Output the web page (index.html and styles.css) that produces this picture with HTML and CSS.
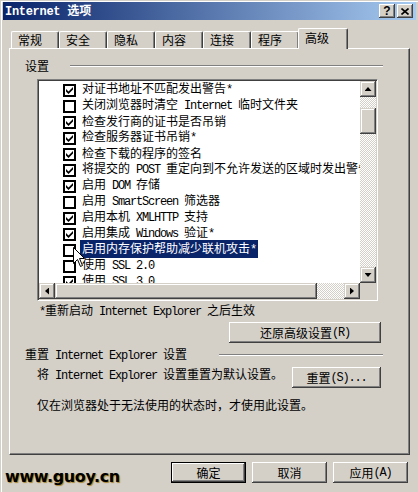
FILE: index.html
```html
<!DOCTYPE html>
<html lang="zh-CN">
<head>
    <meta charset="UTF-8">
    <title>Internet 选项</title>
    <link rel="stylesheet" href="styles.css">
</head>
<body>
    <div class="window">
        <div class="titlebar">
            <span class="title"><span class="en">Internet </span>选项</span>
            <div class="title-btns">
                <span class="tbtn help">?</span>
                <span class="tbtn">
                    <svg width="8" height="7" viewBox="0 0 8 7"><path d="M0.5 0.5 L7.5 6.5 M7.5 0.5 L0.5 6.5" stroke="#000" stroke-width="1.6"/></svg>
                </span>
            </div>
        </div>

        <div class="tabs">
            <div class="tab">常规</div>
            <div class="tab">安全</div>
            <div class="tab">隐私</div>
            <div class="tab">内容</div>
            <div class="tab">连接</div>
            <div class="tab">程序</div>
            <div class="tab active">高级</div>
        </div>

        <div class="panel">
            <div class="group-head">
                <span class="group-label">设置</span>
                <span class="rule"></span>
            </div>

            <div class="listbox">
                <div class="list-view">
                    <div class="item"><span class="cb on"></span><span class="label">对证书地址不匹配发出警告<span class="en">*</span></span></div>
                    <div class="item"><span class="cb"></span><span class="label">关闭浏览器时清空<span class="en"> Internet </span>临时文件夹</span></div>
                    <div class="item"><span class="cb on"></span><span class="label">检查发行商的证书是否吊销</span></div>
                    <div class="item"><span class="cb on"></span><span class="label">检查服务器证书吊销<span class="en">*</span></span></div>
                    <div class="item"><span class="cb on"></span><span class="label">检查下载的程序的签名</span></div>
                    <div class="item"><span class="cb on"></span><span class="label">将提交的<span class="en"> POST </span>重定向到不允许发送的区域时发出警告</span></div>
                    <div class="item"><span class="cb on"></span><span class="label">启用<span class="en"> DOM </span>存储</span></div>
                    <div class="item"><span class="cb"></span><span class="label">启用<span class="en"> SmartScreen </span>筛选器</span></div>
                    <div class="item"><span class="cb on"></span><span class="label">启用本机<span class="en"> XMLHTTP </span>支持</span></div>
                    <div class="item"><span class="cb on"></span><span class="label">启用集成<span class="en"> Windows </span>验证<span class="en">*</span></span></div>
                    <div class="item sel"><span class="cb"></span><span class="label">启用内存保护帮助减少联机攻击<span class="en">*</span></span></div>
                    <div class="item"><span class="cb"></span><span class="label">使用<span class="en"> SSL 2.0</span></span></div>
                    <div class="item"><span class="cb on"></span><span class="label">使用<span class="en"> SSL 3.0</span></span></div>
                </div>
                <div class="vscroll">
                    <span class="sbtn"><i class="arrow up"></i></span>
                    <div class="track"><span class="thumb"></span></div>
                    <span class="sbtn"><i class="arrow down"></i></span>
                </div>
                <div class="hscroll">
                    <span class="sbtn"><i class="arrow left"></i></span>
                    <div class="track"><span class="thumb"></span></div>
                    <span class="sbtn"><i class="arrow right"></i></span>
                </div>
                <div class="corner"></div>
            </div>

            <p class="note"><span class="en">*</span>重新启动<span class="en"> Internet Explorer </span>之后生效</p>

            <div class="restore-row">
                <span class="btn restore">还原高级设置<span class="en">(R)</span></span>
            </div>

            <div class="group-head reset">
                <span class="group-label">重置<span class="en"> Internet Explorer </span>设置</span>
                <span class="rule"></span>
            </div>

            <div class="reset-row">
                <span class="desc">将<span class="en"> Internet Explorer </span>设置重置为默认设置。</span>
                <span class="btn reset-btn">重置<span class="en">(S)...</span></span>
            </div>

            <p class="hint">仅在浏览器处于无法使用的状态时，才使用此设置。</p>
        </div>

        <div class="footer">
            <span class="btn default">确定</span>
            <span class="btn">取消</span>
            <span class="btn">应用<span class="en">(A)</span></span>
        </div>

        <div class="watermark">www.guoy.cn</div>

        <svg class="cursor" width="13" height="21" viewBox="0 0 13 21">
            <path d="M0.5 0.5 V16.5 L4.5 12.5 L7.5 19.5 L9.5 18.5 L6.5 11.5 H11.5 Z" fill="#fff" stroke="#000" stroke-width="1"/>
        </svg>
    </div>
</body>
</html>
```

FILE: styles.css
```css
* {
    box-sizing: border-box;
}

body {
    margin: 0;
    background: #d4d0c8;
    font-family: "Noto Sans CJK SC", sans-serif;
    font-size: 12px;
    color: #000;
}

.en {
    font-family: "Liberation Mono", monospace;
    font-size: 12px;
    letter-spacing: -1.2px;
}

.window {
    position: relative;
    width: 418px;
    height: 492px;
    overflow: hidden;
    background: #d4d0c8;
    box-shadow: inset 1px 1px #d4d0c8, inset 2px 2px #fff;
    padding-top: 2px;
}

/* title bar */
.titlebar {
    display: flex;
    align-items: center;
    justify-content: space-between;
    height: 18px;
    margin: 0 2px 0 3px;
    padding: 0 3px 0 2px;
    background: linear-gradient(to right, #0a246a, #a6caf0);
    color: #fff;
    font-weight: bold;
}

.title {
    line-height: 16px;
}

.title .en {
    font-size: 12px;
    letter-spacing: -0.3px;
    font-weight: bold;
}

.title-btns {
    display: flex;
    gap: 2px;
}

.tbtn {
    display: flex;
    align-items: center;
    justify-content: center;
    width: 16px;
    height: 14px;
    background: #d4d0c8;
    color: #000;
    box-shadow: inset -1px -1px #404040, inset 1px 1px #fff, inset -2px -2px #808080;
}

.tbtn.help {
    font-family: "Liberation Sans", sans-serif;
    font-size: 12px;
    font-weight: bold;
    line-height: 14px;
}

/* tabs */
.tabs {
    display: flex;
    align-items: flex-end;
    height: 20px;
    margin-top: 8px;
    padding-left: 11px;
}

.tab {
    width: 48px;
    height: 17px;
    padding-left: 6px;
    line-height: 16px;
    border-top: 1px solid #fff;
    border-left: 1px solid #fff;
    border-right: 1px solid #404040;
    border-radius: 2px 2px 0 0;
    box-shadow: inset -1px 0 #808080;
    background: #d4d0c8;
}

.tab.active {
    position: relative;
    z-index: 1;
    width: 50px;
    height: 21px;
    margin: 0 -1px -1px;
    padding-top: 1px;
}

/* tab page */
.panel {
    width: 401px;
    height: 407px;
    margin-left: 9px;
    padding: 11px 0 0 15px;
    border: 1px solid;
    border-color: #fff #404040 #404040 #fff;
    box-shadow: inset -1px -1px #808080;
}

.group-head {
    display: flex;
    align-items: center;
    width: 358px;
    height: 12px;
    line-height: 12px;
}

.group-label {
    margin-right: 21px;
    white-space: nowrap;
}

.group-head.reset {
    margin-top: 6px;
}

.group-head.reset .group-label {
    margin-right: 32px;
}

.rule {
    flex: 1;
    border-top: 1px solid #808080;
    border-bottom: 1px solid #fff;
}

/* list box */
.listbox {
    display: grid;
    grid-template-columns: 321px 16px;
    grid-template-rows: 202px 16px;
    width: 341px;
    height: 222px;
    margin: 7px 0 0 12px;
    padding: 1px;
    background: #fff;
    border: 1px solid;
    border-color: #808080 #fff #fff #808080;
    box-shadow: inset 1px 1px #404040, inset -1px -1px #d4d0c8;
}

.list-view {
    overflow: hidden;
}

.item {
    display: flex;
    align-items: center;
    height: 16px;
    padding-left: 24px;
    white-space: nowrap;
}

.cb {
    position: relative;
    flex: none;
    width: 13px;
    height: 13px;
    margin: 3px 4px 0 0;
    border: 2px solid #000;
    background: #fff;
}

.cb.on::after {
    content: "";
    position: absolute;
    left: 1px;
    top: 1px;
    width: 7px;
    height: 7px;
    background: #000;
    clip-path: polygon(0 2px, 2.5px 4.5px, 7px 0, 7px 2.5px, 2.5px 7px, 0 4.5px);
}

.label {
    padding: 0 2px;
    line-height: 16px;
}

.item.sel .label {
    background: #0a246a;
    color: #fff;
}

/* scroll bars */
.vscroll {
    display: flex;
    flex-direction: column;
}

.hscroll {
    display: flex;
}

.sbtn,
.thumb {
    display: flex;
    align-items: center;
    justify-content: center;
    flex: none;
    width: 16px;
    height: 16px;
    background: #d4d0c8;
    box-shadow: inset -1px -1px #404040, inset 1px 1px #d4d0c8, inset -2px -2px #808080, inset 2px 2px #fff;
}

.track {
    flex: 1;
    background: repeating-conic-gradient(#fff 0 25%, #d4d0c8 0 50%) 0 0 / 2px 2px;
}

.vscroll .track {
    padding-top: 11px;
}

.vscroll .thumb {
    height: 26px;
}

.hscroll .thumb {
    width: 262px;
}

.corner {
    background: #d4d0c8;
}

.arrow {
    display: block;
    background: #000;
}

.arrow.up {
    width: 7px;
    height: 4px;
    clip-path: polygon(50% 0, 100% 100%, 0 100%);
}

.arrow.down {
    width: 7px;
    height: 4px;
    clip-path: polygon(0 0, 100% 0, 50% 100%);
}

.arrow.left {
    width: 4px;
    height: 7px;
    clip-path: polygon(100% 0, 100% 100%, 0 50%);
}

.arrow.right {
    width: 4px;
    height: 7px;
    clip-path: polygon(0 0, 100% 50%, 0 100%);
}

/* lower part */
.note {
    margin: 3px 0 0 14px;
    line-height: 12px;
}

.restore-row {
    display: flex;
    justify-content: flex-end;
    width: 356px;
    margin-top: 4px;
}

.btn {
    display: flex;
    align-items: center;
    justify-content: center;
    height: 21px;
    background: #d4d0c8;
    box-shadow: inset -1px -1px #404040, inset 1px 1px #fff, inset -2px -2px #808080;
    white-space: nowrap;
}

.btn.restore {
    width: 152px;
}

.reset-row {
    display: flex;
    justify-content: space-between;
    width: 344px;
    margin: 6px 0 0 12px;
}

.desc {
    line-height: 14px;
}

.btn.reset-btn {
    width: 89px;
}

.hint {
    margin: 11px 0 0 12px;
    line-height: 12px;
}

.footer {
    display: flex;
    justify-content: flex-end;
    gap: 6px;
    margin-top: 7px;
    padding-right: 10px;
}

.footer .btn {
    width: 75px;
}

.btn.default {
    border: 1px solid #000;
}

.watermark {
    position: absolute;
    left: 5px;
    top: 467px;
    font-family: "DejaVu Sans", sans-serif;
    font-size: 16px;
    font-weight: bold;
    letter-spacing: -0.4px;
    color: #000;
    text-shadow: 1px 1px 1px #a5822e;
}

.cursor {
    position: absolute;
    left: 73px;
    top: 247px;
}
```
